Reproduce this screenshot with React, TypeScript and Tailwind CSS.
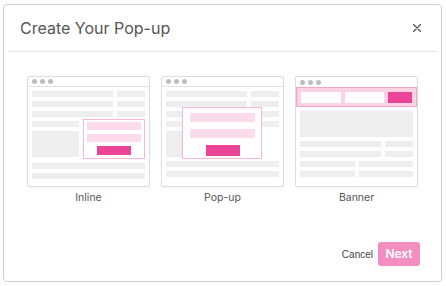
import React from "react";

// Colours used by the little wireframe thumbnails
const bar = "bg-[#eeeeee]";

const TitleBar: React.FC<{ line?: boolean }> = ({ line = true }) => (
  <div className={`h-[10px] flex items-center gap-[3px] pl-[4px] ${line ? "border-b border-[#e2e2e2]" : ""}`}>
    <span className="w-[5px] h-[5px] rounded-full bg-[#bdbdbd]" />
    <span className="w-[5px] h-[5px] rounded-full bg-[#bdbdbd]" />
    <span className="w-[5px] h-[5px] rounded-full bg-[#bdbdbd]" />
  </div>
);

const TwoCol: React.FC<{ left: string; }> = ({ left }) => (
  <div className="flex gap-[4px]">
    <div className={`${left} h-[6px] ${bar}`} />
    <div className={`flex-1 h-[6px] ${bar}`} />
  </div>
);

const Frame: React.FC<{ children: React.ReactNode }> = ({ children }) => (
  <div className="relative w-[123px] h-[111px] border border-[#dcdcdc] rounded-[2px] bg-white overflow-hidden shadow-[0_1px_1px_rgba(0,0,0,0.04)]">
    {children}
  </div>
);

const InlineThumb = () => (
  <Frame>
    <TitleBar />
    <div className="px-[4px] pt-[4px] flex flex-col gap-[4px]">
      <TwoCol left="w-[81px]" />
      <TwoCol left="w-[81px]" />
      <TwoCol left="w-[81px]" />
      <div className="flex gap-[4px] items-start">
        <div className="w-[47px] flex flex-col gap-[4px]">
          <div className={`h-[6px] ${bar}`} />
          <div className={`h-[26px] ${bar}`} />
        </div>
        <div className="flex-1 h-[40px] -mt-[2px] border border-[#f6b6d4] bg-white px-[3px] pt-[2px] flex flex-col gap-[4px]">
          <div className="h-[8px] bg-[#fcdcea]" />
          <div className="h-[8px] bg-[#fcdcea]" />
          <div className="mx-auto w-[34px] h-[9px] bg-[#ec4496]" />
        </div>
      </div>
      <div className={`h-[6px] ${bar}`} />
      <div className={`h-[6px] ${bar}`} />
    </div>
  </Frame>
);

const PopupThumb = () => (
  <Frame>
    <TitleBar />
    <div className="px-[4px] pt-[4px] flex flex-col gap-[4px]">
      <TwoCol left="w-[81px]" />
      <TwoCol left="w-[81px]" />
      <TwoCol left="w-[81px]" />
      <div className={`h-[6px] ${bar}`} />
      <div className={`w-[47px] h-[26px] ${bar}`} />
      <div className={`h-[6px] ${bar}`} />
      <div className={`h-[6px] ${bar}`} />
    </div>
    <div className="absolute left-[20px] top-[30px] w-[80px] h-[52px] border border-[#f6b6d4] bg-white pl-[7px] pr-[6px] pt-[5px] flex flex-col gap-[7px]">
      <div className="h-[9px] bg-[#fcdcea]" />
      <div className="h-[9px] bg-[#fcdcea]" />
      <div className="mx-auto w-[34px] h-[11px] bg-[#ec4496]" />
    </div>
  </Frame>
);

const BannerThumb = () => (
  <Frame>
    <TitleBar line={false} />
    <div className="h-[20px] bg-[#fbd3e5] border border-[#f4a6ca] flex items-center gap-[4px] px-[4px]">
      <div className="w-[40px] h-[11px] bg-white" />
      <div className="w-[39px] h-[11px] bg-white" />
      <div className="flex-1 h-[11px] bg-[#ec4496]" />
    </div>
    <div className="px-[4px] pt-[4px] flex flex-col gap-[4px]">
      <div className={`h-[26px] ${bar}`} />
      <TwoCol left="w-[81px]" />
      <TwoCol left="w-[81px]" />
      <TwoCol left="w-[55px]" />
      <TwoCol left="w-[55px]" />
    </div>
  </Frame>
);

const options = [
  { label: "Inline", Thumb: InlineThumb },
  { label: "Pop-up", Thumb: PopupThumb },
  { label: "Banner", Thumb: BannerThumb },
];

export default function App() {
  return (
    <div className="w-[446px] h-[286px] bg-white pt-[4px] pl-[3px] font-['Inter','Noto_Sans',sans-serif]">
      <div className="w-[439px] h-[278px] border border-[#cfcfcf] rounded-[4px] bg-white flex flex-col">
        {/* Header */}
        <div className="mx-[4px] h-[47px] border-b border-[#e4e4e4] flex items-center justify-between pl-[12px] pr-[16px]">
          <h1 className="text-[16px] text-[#555555] leading-none">Create Your Pop-up</h1>
          <svg width="8" height="8" viewBox="0 0 8 8" className="text-[#555]">
            <path d="M0.5 0.5L7.5 7.5M7.5 0.5L0.5 7.5" stroke="currentColor" strokeWidth="1.3" strokeLinecap="round" />
          </svg>
        </div>

        {/* Type options */}
        <div className="mt-[24px] flex justify-center gap-[11px]">
          {options.map(({ label, Thumb }) => (
            <div key={label} className="flex flex-col items-center">
              <Thumb />
              <span className="mt-[4px] text-[10.5px] leading-[14px] text-[#555]">{label}</span>
            </div>
          ))}
        </div>

        {/* Footer */}
        <div className="mt-auto mb-[15px] pr-[21px] flex justify-end items-center gap-[5px]">
          <button className="font-['Liberation_Sans',sans-serif] text-[10px] text-[#444]">Cancel</button>
          <button className="w-[42px] h-[24px] rounded-[3px] bg-[#f48dc0] text-white text-[12px] font-semibold">
            Next
          </button>
        </div>
      </div>
    </div>
  );
}
